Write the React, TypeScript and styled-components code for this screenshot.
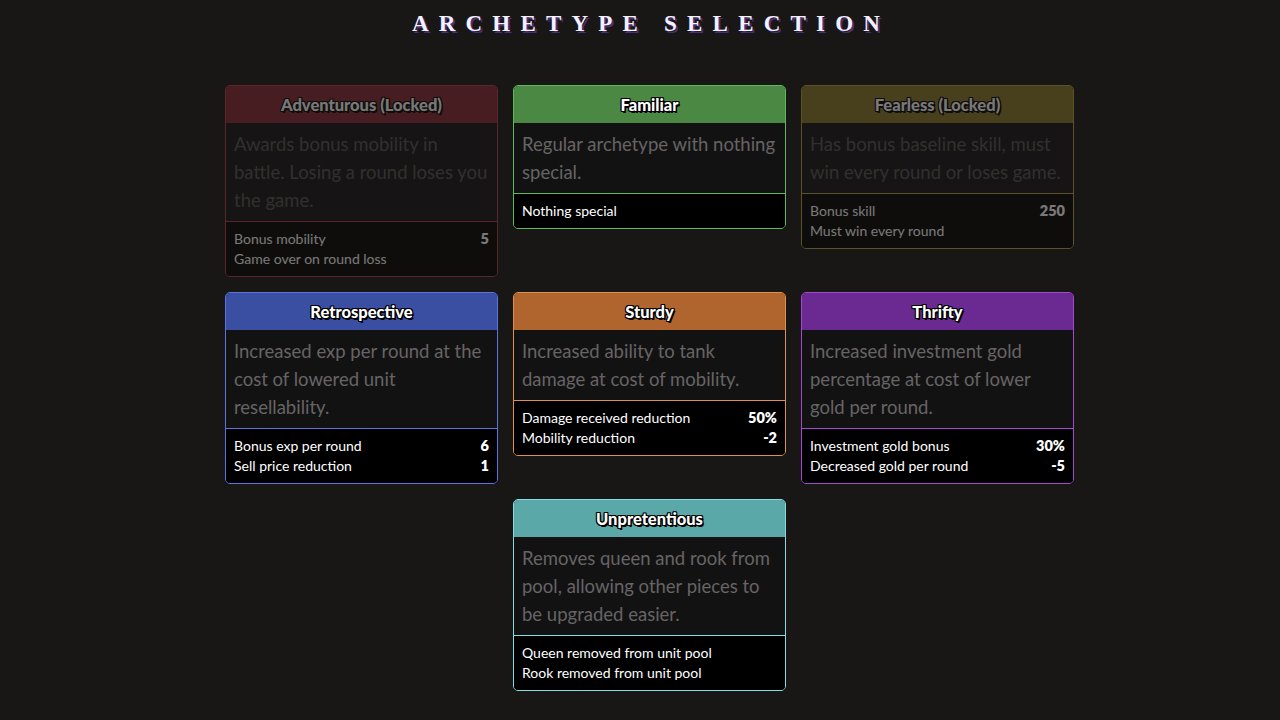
import React from "react";
import styled, { createGlobalStyle } from "styled-components";

const GlobalStyle = createGlobalStyle`
  html, body { margin: 0; padding: 0; background: #191715; }
  body { font-family: "Lato", "Noto Sans", sans-serif; color: #fff; }
`;

const Page = styled.div`
  min-height: 720px;
  display: flex;
  flex-direction: column;
  align-items: center;
  padding-top: 11px;
`;

const Title = styled.h1`
  margin: 0 0 0 22px;
  font-family: "Liberation Serif", "DejaVu Serif", serif;
  font-weight: 700;
  font-size: 23px;
  letter-spacing: 10.2px;
  line-height: 26px;
  color: #f4f0ff;
  text-shadow: 2px 2px 0 #4b2f7a;
`;

const Grid = styled.div`
  margin-top: 48px;
  margin-left: 19px;
  display: grid;
  grid-template-columns: repeat(3, 273px);
  column-gap: 15px;
  row-gap: 15px;
  align-items: start;
`;

type Tone = { head: string; border: string };

const Card = styled.div<{ $tone: Tone; $locked?: boolean; $col?: number }>`
  border: 1.5px solid ${(p) => p.$tone.border};
  border-radius: 5px;
  overflow: hidden;
  opacity: ${(p) => (p.$locked ? 0.42 : 1)};
  grid-column: ${(p) => (p.$col ? p.$col : "auto")};
  background: #131213;
`;

const Header = styled.div<{ $tone: Tone }>`
  background: ${(p) => p.$tone.head};
  height: 37px;
  display: flex;
  align-items: center;
  justify-content: center;
  font-weight: 900;
  font-size: 16.5px;
  color: #fff;
  text-shadow: -1px -1px 0 #000, 1px -1px 0 #000, -1px 1px 0 #000, 1px 1px 0 #000,
    0 1px 0 #000, 0 -1px 0 #000, 1px 0 0 #000, -1px 0 0 #000, 1.5px 1.5px 0 #000;
`;

const Desc = styled.div<{ $tone: Tone; $locked?: boolean }>`
  padding: 7px 8px 7px 8px;
  font-size: 18.5px;
  line-height: 28px;
  color: ${(p) => (p.$locked ? "#555353" : "#666464")};
  border-bottom: 1.5px solid ${(p) => p.$tone.border};
  font-weight: 400;
`;

const Footer = styled.div`
  background: #000;
  padding: 7px 8px 7px 8px;
  font-size: 14px;
  line-height: 20px;
`;

const Row = styled.div`
  display: flex;
  justify-content: space-between;
`;

const Value = styled.span`
  font-weight: 800;
  font-size: 14.5px;
`;

const tones: Record<string, Tone> = {
  red: { head: "#8a2634", border: "#b8394a" },
  green: { head: "#4a8844", border: "#5cba5a" },
  yellow: { head: "#8a7a2a", border: "#b8a448" },
  blue: { head: "#3a4ea2", border: "#5a74e6" },
  orange: { head: "#b0642e", border: "#e0904e" },
  purple: { head: "#6a2a92", border: "#a646d6" },
  teal: { head: "#5aa8a8", border: "#86dce2" },
};

type Stat = { label: string; value?: string };
type Arch = {
  name: string;
  tone: Tone;
  locked?: boolean;
  col?: number;
  desc: string;
  stats: Stat[];
};

const archetypes: Arch[] = [
  {
    name: "Adventurous (Locked)",
    tone: tones.red,
    locked: true,
    desc: "Awards bonus mobility in battle. Losing a round loses you the game.",
    stats: [{ label: "Bonus mobility", value: "5" }, { label: "Game over on round loss" }],
  },
  {
    name: "Familiar",
    tone: tones.green,
    desc: "Regular archetype with nothing special.",
    stats: [{ label: "Nothing special" }],
  },
  {
    name: "Fearless (Locked)",
    tone: tones.yellow,
    locked: true,
    desc: "Has bonus baseline skill, must win every round or loses game.",
    stats: [{ label: "Bonus skill", value: "250" }, { label: "Must win every round" }],
  },
  {
    name: "Retrospective",
    tone: tones.blue,
    desc: "Increased exp per round at the cost of lowered unit resellability.",
    stats: [
      { label: "Bonus exp per round", value: "6" },
      { label: "Sell price reduction", value: "1" },
    ],
  },
  {
    name: "Sturdy",
    tone: tones.orange,
    desc: "Increased ability to tank damage at cost of mobility.",
    stats: [
      { label: "Damage received reduction", value: "50%" },
      { label: "Mobility reduction", value: "-2" },
    ],
  },
  {
    name: "Thrifty",
    tone: tones.purple,
    desc: "Increased investment gold percentage at cost of lower gold per round.",
    stats: [
      { label: "Investment gold bonus", value: "30%" },
      { label: "Decreased gold per round", value: "-5" },
    ],
  },
  {
    name: "Unpretentious",
    tone: tones.teal,
    col: 2,
    desc: "Removes queen and rook from pool, allowing other pieces to be upgraded easier.",
    stats: [{ label: "Queen removed from unit pool" }, { label: "Rook removed from unit pool" }],
  },
];

export default function App() {
  return (
    <>
      <GlobalStyle />
      <Page>
        <Title>ARCHETYPE SELECTION</Title>
        <Grid>
          {archetypes.map((a) => (
            <Card key={a.name} $tone={a.tone} $locked={a.locked} $col={a.col}>
              <Header $tone={a.tone}>{a.name}</Header>
              <Desc $tone={a.tone} $locked={a.locked}>{a.desc}</Desc>
              <Footer>
                {a.stats.map((s) => (
                  <Row key={s.label}>
                    <span>{s.label}</span>
                    {s.value && <Value>{s.value}</Value>}
                  </Row>
                ))}
              </Footer>
            </Card>
          ))}
        </Grid>
      </Page>
    </>
  );
}
